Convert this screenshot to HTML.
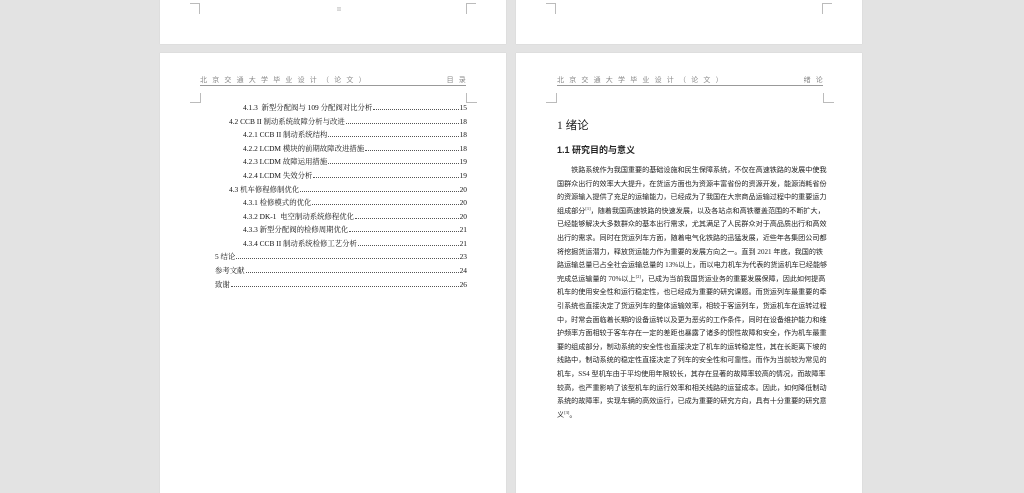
<!DOCTYPE html>
<html><head><meta charset="utf-8"><style>
*{margin:0;padding:0;box-sizing:border-box}
body{width:1024px;height:483px;background:#e3e3e3;position:relative;overflow:hidden;font-family:"Liberation Serif","Noto Serif CJK SC","Noto Sans CJK SC",serif;color:#222}
.pg{position:absolute;background:#fff;box-shadow:0 0 1px #c8c8c8}
.a{position:absolute;white-space:nowrap}
.hd{position:absolute;font-size:7px;color:#888;letter-spacing:5.2px;border-bottom:0.8px solid #999;height:9px;line-height:8px;font-family:"Liberation Sans","Noto Sans CJK SC",sans-serif}
.c{position:absolute;width:10px;height:10px;border-color:#bbb;border-style:solid;border-width:0}
.toc{position:absolute;font-size:7.4px;line-height:9px;display:flex;align-items:baseline;color:#111}
.toc .d{flex:1;border-bottom:0.8px dotted #555;margin:0 1px;height:6px}
.p{position:absolute;left:557px;width:266px;height:9px;font-size:7.1px;line-height:9px;text-align:justify;text-align-last:justify;white-space:nowrap;font-family:"Liberation Serif","Noto Sans CJK SC",sans-serif;color:#222}
sup{font-size:4.5px;vertical-align:baseline;position:relative;top:-3px;line-height:0}
</style></head><body>
<div class="pg" style="left:160px;top:0;width:346px;height:44px"></div>
<div class="pg" style="left:516px;top:0;width:346px;height:44px"></div>
<div class="c" style="left:190px;top:3px;border-top-width:1px;border-right-width:1px;height:11px"></div>
<div class="c" style="left:466px;top:3px;border-top-width:1px;border-left-width:1px;height:11px"></div>
<div class="c" style="left:546px;top:3px;border-top-width:1px;border-right-width:1px;height:11px"></div>
<div class="c" style="left:822px;top:3px;border-top-width:1px;border-left-width:1px;height:11px"></div>
<div class="a" style="left:337px;top:7px;font-size:6px;color:#999">II</div>
<div class="pg" style="left:160px;top:53px;width:346px;height:440px"></div>
<div class="pg" style="left:516px;top:53px;width:346px;height:440px"></div>

<div class="hd" style="left:200px;top:77px;width:266px">北京交通大学毕业设计（论文）<span style="position:absolute;right:-5px">目录</span></div>
<div class="hd" style="left:557px;top:77px;width:266px">北京交通大学毕业设计（论文）<span style="position:absolute;right:-5px">绪论</span></div>
<div class="c" style="left:190px;top:93px;border-bottom-width:1px;border-right-width:1px;width:11px"></div>
<div class="c" style="left:466px;top:93px;border-bottom-width:1px;border-left-width:1px;width:11px"></div>
<div class="c" style="left:546px;top:93px;border-bottom-width:1px;border-right-width:1px;width:11px"></div>
<div class="c" style="left:823px;top:93px;border-bottom-width:1px;border-left-width:1px;width:11px"></div>

<div class="toc" style="left:243px;top:103px;width:224px"><span>4.1.3&nbsp; 新型分配阀与 109 分配阀对比分析</span><span class="d"></span><span>15</span></div>
<div class="toc" style="left:229px;top:117px;width:238px"><span>4.2 CCB II 制动系统故障分析与改进</span><span class="d"></span><span>18</span></div>
<div class="toc" style="left:243px;top:130px;width:224px"><span>4.2.1 CCB II 制动系统结构</span><span class="d"></span><span>18</span></div>
<div class="toc" style="left:243px;top:144px;width:224px"><span>4.2.2 LCDM 模块的前期故障改进措施</span><span class="d"></span><span>18</span></div>
<div class="toc" style="left:243px;top:157px;width:224px"><span>4.2.3 LCDM 故障运用措施</span><span class="d"></span><span>19</span></div>
<div class="toc" style="left:243px;top:171px;width:224px"><span>4.2.4 LCDM 失效分析</span><span class="d"></span><span>19</span></div>
<div class="toc" style="left:229px;top:185px;width:238px"><span>4.3 机车修程修制优化</span><span class="d"></span><span>20</span></div>
<div class="toc" style="left:243px;top:198px;width:224px"><span>4.3.1 检修模式的优化</span><span class="d"></span><span>20</span></div>
<div class="toc" style="left:243px;top:212px;width:224px"><span>4.3.2 DK-1&nbsp; 电空制动系统修程优化</span><span class="d"></span><span>20</span></div>
<div class="toc" style="left:243px;top:225px;width:224px"><span>4.3.3 新型分配阀的检修周期优化</span><span class="d"></span><span>21</span></div>
<div class="toc" style="left:243px;top:239px;width:224px"><span>4.3.4 CCB II 制动系统检修工艺分析</span><span class="d"></span><span>21</span></div>
<div class="toc" style="left:215px;top:252px;width:252px"><span>5 结论</span><span class="d"></span><span>23</span></div>
<div class="toc" style="left:215px;top:266px;width:252px"><span>参考文献</span><span class="d"></span><span>24</span></div>
<div class="toc" style="left:215px;top:280px;width:252px"><span>致谢</span><span class="d"></span><span>26</span></div>

<div class="a" style="left:557px;top:117px;font-size:11.5px;font-family:'Liberation Serif','Noto Sans CJK SC',sans-serif;color:#222">1 绪论</div>
<div class="a" style="left:557px;top:143px;font-size:9px;font-weight:bold;font-family:'Liberation Sans','Noto Sans CJK SC',sans-serif;color:#222">1.1 研究目的与意义</div>

<div class="p" style="top:166px">　　铁路系统作为我国重要的基础设施和民生保障系统，不仅在高速铁路的发展中使我</div>
<div class="p" style="top:180px">国群众出行的效率大大提升，在货运方面也为资源丰富省份的资源开发，能源消耗省份</div>
<div class="p" style="top:193px">的资源输入提供了充足的运输能力，已经成为了我国在大宗商品运输过程中的重要运力</div>
<div class="p" style="top:207px">组成部分<sup>[1]</sup>，随着我国高速铁路的快速发展，以及各站点和高铁覆盖范围的不断扩大，</div>
<div class="p" style="top:220px">已经能够解决大多数群众的基本出行需求，尤其满足了人民群众对于高品质出行和高效</div>
<div class="p" style="top:234px">出行的需求。同时在货运列车方面，随着电气化铁路的迅猛发展，近些年各集团公司都</div>
<div class="p" style="top:248px">将挖掘货运潜力，释放货运能力作为重要的发展方向之一。直到 2021 年底，我国的铁</div>
<div class="p" style="top:261px">路运输总量已占全社会运输总量的 13%以上，而以电力机车为代表的货运机车已经能够</div>
<div class="p" style="top:275px">完成总运输量的 70%以上<sup>[2]</sup>，已成为当前我国货运业务的重要发展保障，因此如何提高</div>
<div class="p" style="top:288px">机车的使用安全性和运行稳定性，也已经成为重要的研究课题。而货运列车最重要的牵</div>
<div class="p" style="top:302px">引系统也直接决定了货运列车的整体运输效率，相较于客运列车，货运机车在运转过程</div>
<div class="p" style="top:316px">中，时常会面临着长期的设备运转以及更为恶劣的工作条件，同时在设备维护能力和维</div>
<div class="p" style="top:329px">护频率方面相较于客车存在一定的差距也暴露了诸多的惯性故障和安全，作为机车最重</div>
<div class="p" style="top:343px">要的组成部分，制动系统的安全性也直接决定了机车的运转稳定性，其在长距离下坡的</div>
<div class="p" style="top:356px">线路中，制动系统的稳定性直接决定了列车的安全性和可靠性。而作为当前较为常见的</div>
<div class="p" style="top:370px">机车，SS4 型机车由于平均使用年限较长，其存在显著的故障率较高的情况，而故障率</div>
<div class="p" style="top:384px">较高，也严重影响了该型机车的运行效率和相关线路的运营成本。因此，如何降低制动</div>
<div class="p" style="top:397px">系统的故障率，实现车辆的高效运行，已成为重要的研究方向，具有十分重要的研究意</div>
<div class="p" style="top:411px;text-align-last:left">义<sup>[3]</sup>。</div>
</body></html>
